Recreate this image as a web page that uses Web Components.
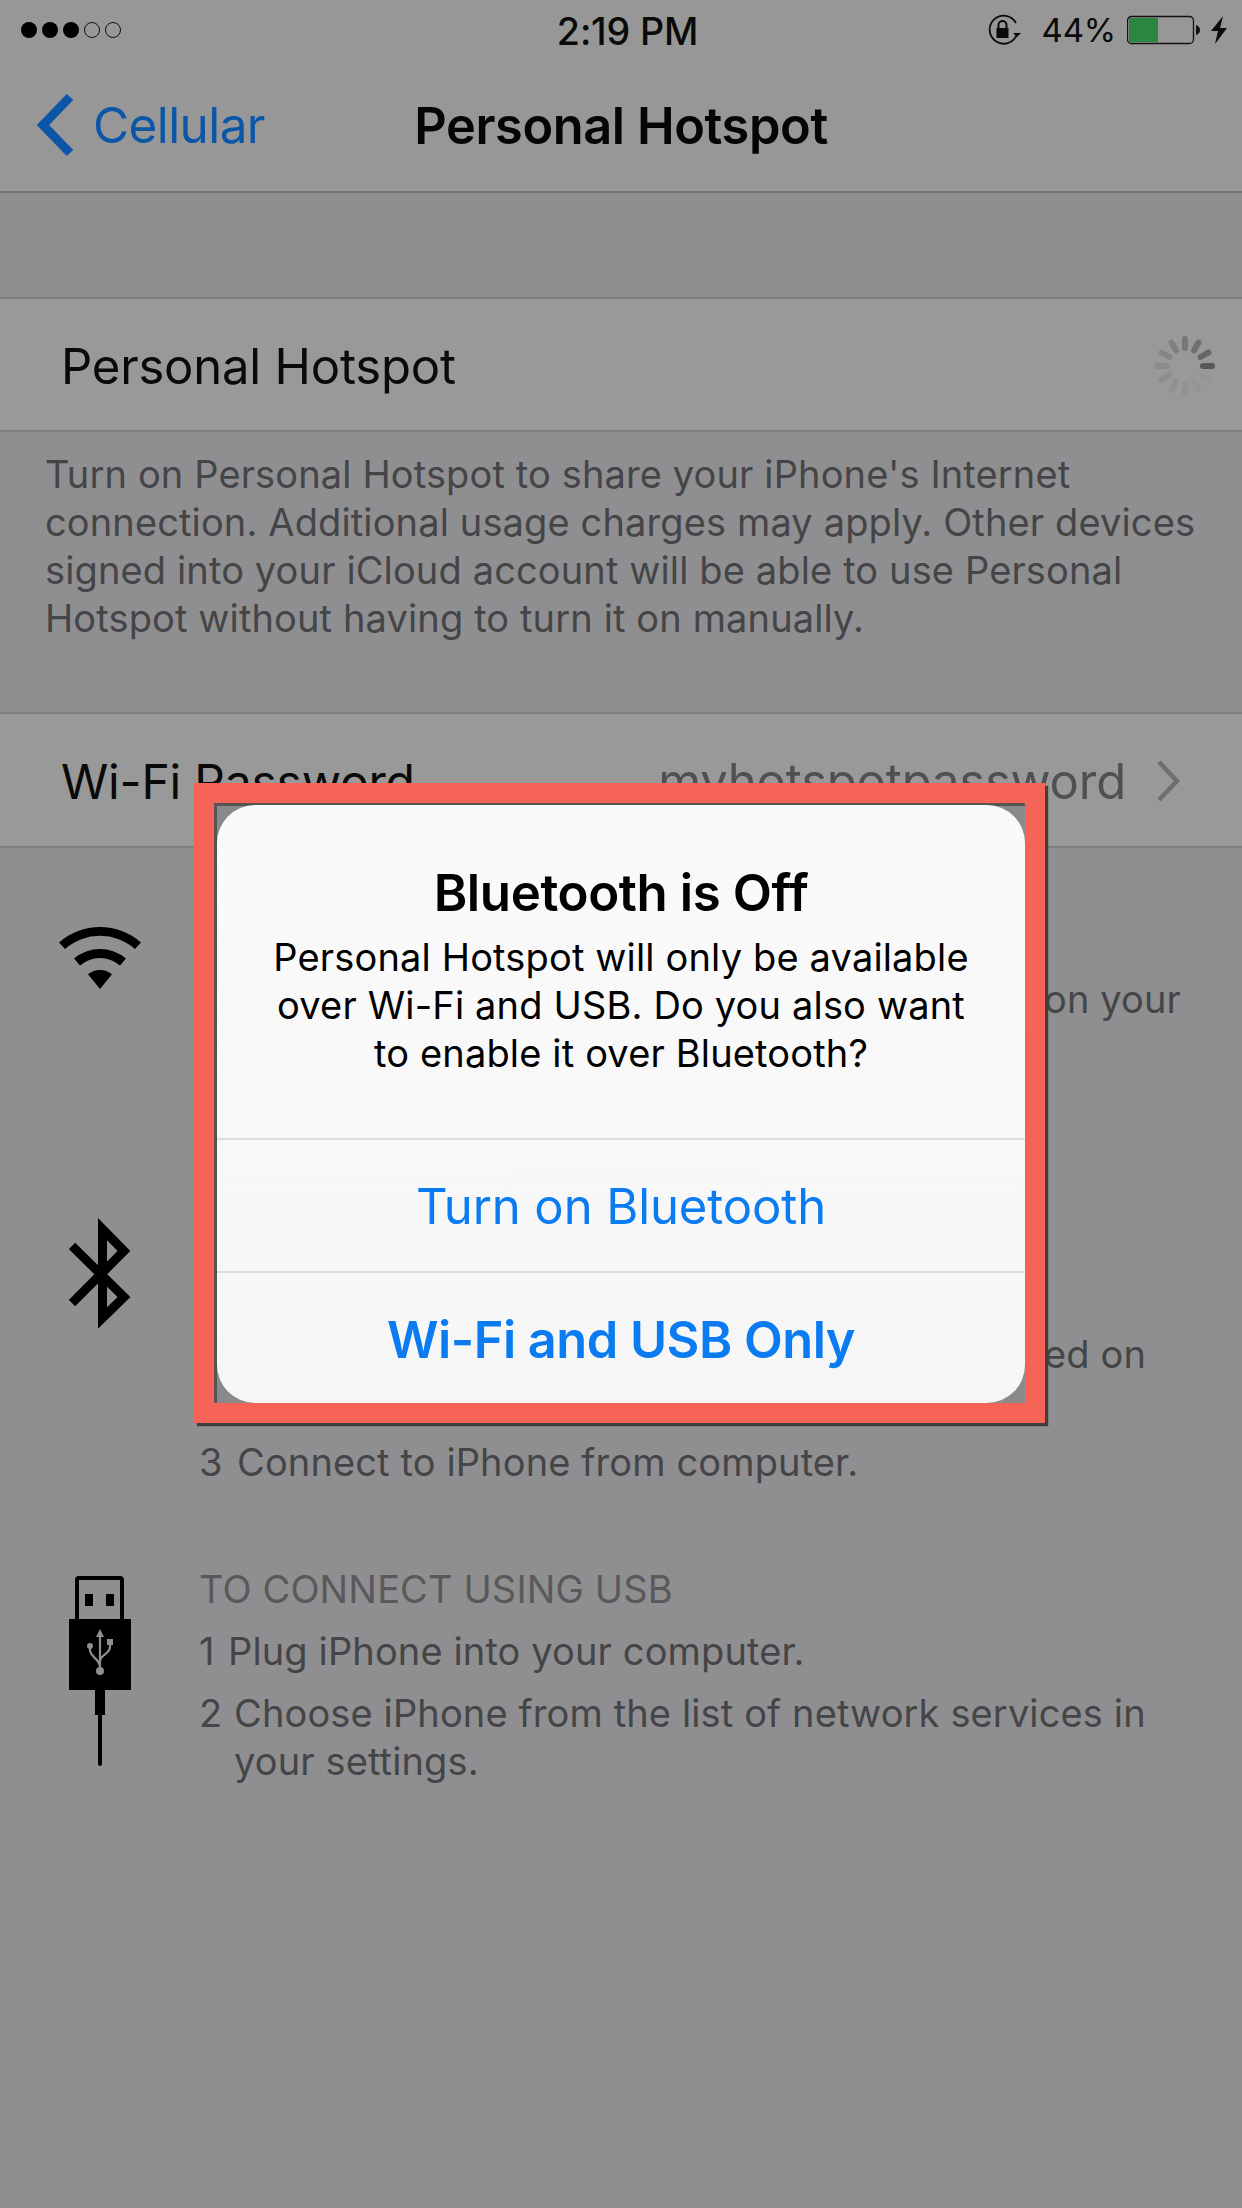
<!DOCTYPE html>
<html><head><meta charset="utf-8">
<style>
html,body{margin:0;padding:0}
body{width:1242px;height:2208px;overflow:hidden;background:#8f8f91;font-family:Inter,"Liberation Sans",sans-serif;position:relative}
</style></head><body>
<template id="t-status"><style>
:host{display:flex;height:60px;align-items:center;justify-content:space-between;padding:0 20px 0 21px;box-sizing:border-box;position:relative;font-size:33px;color:#0a0a0a;background:#979797}
.dots{display:flex;gap:5px}
.dots i{width:16px;height:16px;border-radius:50%;box-sizing:border-box;background:#000;display:block}
.dots i.o{background:none;border:1px solid #111}
.time{position:absolute;left:13px;right:0;top:11px;text-align:center;font-size:37.7px;font-weight:500;line-height:40px;letter-spacing:-.2px}
.right{display:flex;align-items:center}
.pct{margin:0 11px 0 19px;font-size:33px;letter-spacing:-.2px}
</style>
<div class="dots"><i></i><i></i><i></i><i class="o"></i><i class="o"></i></div>
<div class="time">2:19 PM</div>
<div class="right">
<svg width="36" height="32" viewBox="0 0 36 32"><path d="M30 20A14 14 0 1 1 29 9" fill="none" stroke="#0a0a0a" stroke-width="1.8"/><path d="M26 19h8l-4 4z" fill="#0a0a0a"/><rect x="9.5" y="14" width="12" height="10" fill="#0a0a0a"/><path d="M11.5 14v-3a4 4 0 0 1 8 0v3" fill="none" stroke="#0a0a0a" stroke-width="2"/></svg>
<span class="pct">44%</span>
<svg width="76" height="30" viewBox="0 0 76 30"><rect x=".5" y="1.5" width="66" height="27" rx="4" fill="none" stroke="#111" stroke-width="1.3"/><rect x="2" y="3" width="29" height="24" fill="#2d863f"/><path d="M69 10c3 1 4 3 4 5s-1 4-4 5z" fill="#111"/></svg>
<svg style="margin-left:7px;margin-right:-6px" width="18" height="30" viewBox="0 0 18 30"><path d="M13 1 1 16h7l-3 13L17 13h-7z" fill="#0a0a0a"/></svg>
</div></template>

<template id="t-nav"><style>
:host{display:flex;height:133px;box-sizing:border-box;border-bottom:2px solid #757575;align-items:center;position:relative;padding:0 0 1px 36px;background:#979797}
.back{display:flex;align-items:center;gap:17px;color:#0c56a8;font-size:49.5px;letter-spacing:-.6px}
.title{position:absolute;left:0;right:0;top:36px;text-align:center;line-height:60px;font-size:50.5px;font-weight:600;color:#050505;letter-spacing:-.4px}
</style>
<div class="back"><svg width="40" height="64" viewBox="0 0 40 64"><path d="M34 4 7 32l27 28" fill="none" stroke="#0c56a8" stroke-width="9"/></svg>Cellular</div>
<div class="title"><slot></slot></div></template>

<template id="t-cell"><style>
:host{display:flex;height:135px;box-sizing:border-box;background:#999;border-top:2px solid #7f7f7f;border-bottom:2px solid #7f7f7f;align-items:center;padding:2px 52px 0 61px;font-size:49px;color:#0a0a0a;letter-spacing:-.2px}
.s{flex:1}
</style><slot></slot><span class="s"></span><slot name="end"></slot></template>

<template id="t-step"><style>
:host{display:block;font-size:38px;line-height:48px;color:#454547;letter-spacing:.13px}
</style><slot></slot></template>

<template id="t-alert"><style>
:host{position:absolute;left:194px;top:783px;width:851px;height:640px;box-sizing:border-box;border:20px solid #f56457;background:#8a8a8c;box-shadow:3px 3px 1px #3f3f3f;display:block}
.inner{position:absolute;inset:0;box-shadow:inset 3px 3px 0 #555}
.card{position:absolute;left:3px;top:2px;right:0;bottom:0;background:linear-gradient(#fafafa,#f6f6f7);border-radius:38px;display:flex;flex-direction:column;overflow:hidden;box-sizing:border-box}
.body{height:333px;box-sizing:border-box;text-align:center;padding:60px 30px 0;color:#000}
h2{margin:0;font-size:51px;font-weight:600;line-height:56px;letter-spacing:-.4px}
p{margin:12px 0 0;font-size:38px;line-height:48px;letter-spacing:.16px}
button{all:unset;display:block;height:132.5px;line-height:134px;text-align:center;font-size:49px;color:#0a7bf0;border-top:2px solid #dcdcdd;letter-spacing:-.1px;box-sizing:border-box}
button.b{font-weight:600;font-size:50.5px;letter-spacing:-.5px}
</style><div class="inner"></div><div class="card"><div class="body"><h2>Bluetooth is Off</h2><p>Personal Hotspot will only be available<br>over Wi-Fi and USB. Do you also want<br>to enable it over Bluetooth?</p></div><button>Turn on Bluetooth</button><button class="b">Wi-Fi and USB Only</button></div></template>

<template id="t-spin"><style>:host{display:block;width:62px;height:62px;margin:-2px -26px 0 0}</style>
<svg width="62" height="62" viewBox="-31 -31 62 62" id="s"></svg></template>

<template id="t-info"><style>
:host{display:flex;align-items:flex-start;position:relative}
.ic{width:199px;flex:none;display:flex;justify-content:center;box-sizing:border-box}
.tx{flex:1;min-width:0;padding-right:40px}
</style><div class="ic"><slot name="icon"></slot></div><div class="tx"><slot></slot></div></template>

<status-bar></status-bar>
<nav-bar>Personal Hotspot</nav-bar>
<div style="height:104px"></div>
<ios-cell style="padding-top:4px">Personal Hotspot<spin-ner slot="end"></spin-ner></ios-cell>
<ios-text style="padding:18px 20px 0 45px;height:280px;box-sizing:border-box">Turn on Personal Hotspot to share your iPhone's Internet<br>connection. Additional usage charges may apply. Other devices<br>signed into your iCloud account will be able to use Personal<br>Hotspot without having to turn it on manually.</ios-text>
<ios-cell style="height:136px;font-size:48px">Wi-Fi Password<span slot="end" style="display:flex;align-items:center;color:#505052;gap:30px;margin-right:10px;font-size:49px">myhotspotpassword<svg width="24" height="42" viewBox="0 0 24 42"><path d="M3 2l18 19L3 40" fill="none" stroke="#6e6e6e" stroke-width="4.5"/></svg></span></ios-cell>
<info-row style="margin-top:78px;height:292px"><svg slot="icon" width="82" height="64" viewBox="0 0 82 64"><path d="M0 16.5A62 62 0 0 1 82 16.5L76 23A53 53 0 0 0 6 23zM15 32.6A40 40 0 0 1 67 32.6L61 39.4A31 31 0 0 0 21 39.4zM29 48.3A19 19 0 0 1 53 48.3L41 63z" fill="#000"/></svg>
<ios-text style="text-align:right;padding-top:49px;padding-right:21px">on your</ios-text></info-row>
<info-row style="height:0"><svg slot="icon" width="62" height="111" viewBox="0 0 62 111"><path d="M3 28 55 79 33.5 100V11L55 33 3 85" fill="none" stroke="#000" stroke-width="9"/></svg></info-row>
<info-row style="height:347px"><svg slot="icon" width="0" height="0"></svg>
<ios-text style="text-align:right;padding-top:112px;padding-right:56px">ed on</ios-text>
<div style="display:flex;margin-top:60px"><ios-text style="width:38px;flex:none">3</ios-text><ios-text>Connect to iPhone from computer.</ios-text></div></info-row>
<info-row><svg slot="icon" style="margin-top:11px" width="62" height="190" viewBox="0 0 62 190"><path d="M8 44V4a2 2 0 0 1 2-2h41a2 2 0 0 1 2 2v40" fill="none" stroke="#000" stroke-width="4"/><rect x="16" y="18" width="8" height="12"/><rect x="37" y="18" width="8" height="12"/><rect y="43" width="62" height="71"/><rect x="26" y="114" width="10" height="25"/><rect x="29" y="130" width="4" height="60" rx="2"/><g fill="none" stroke="#8f8f91" stroke-width="2.2"><path d="M31 60v36M21 71v3c0 7 10 9 10 17M41 68v3c0 7-10 8-10 14"/></g><g fill="#8f8f91"><circle cx="31" cy="95" r="4"/><circle cx="21" cy="70" r="3"/><rect x="38" y="63" width="6" height="6"/><path d="M31 53l4 8h-8z"/></g></svg>
<div><ios-text style="color:#59595b">TO CONNECT USING USB</ios-text>
<div style="display:flex;margin-top:14px"><ios-text style="width:29px;flex:none">1</ios-text><ios-text>Plug iPhone into your computer.</ios-text></div>
<div style="display:flex;margin-top:14px"><ios-text style="width:35px;flex:none">2</ios-text><ios-text>Choose iPhone from the list of network services in<br>your settings.</ios-text></div></div></info-row>
<ios-alert></ios-alert>

<script>
function reg(name, tpl, init){
  customElements.define(name, class extends HTMLElement{
    constructor(){super();const r=this.attachShadow({mode:'open'});r.appendChild(document.getElementById(tpl).content.cloneNode(true));if(init)init(r)}
  });
}
reg('status-bar','t-status');
reg('nav-bar','t-nav');
reg('ios-cell','t-cell');
reg('ios-text','t-step');
reg('info-row','t-info');
reg('ios-alert','t-alert');
reg('spin-ner','t-spin',r=>{
  const s=r.getElementById('s');let h='';
  const cols=['#585858','#666666','#707070','#787878','#808080','#868686','#8b8b8b','#8e8e8e','#909090','#929292','#949494','#969696'];
  for(let i=0;i<12;i++){
    h+=`<rect x="15" y="-3" width="15" height="6" rx="3" fill="${cols[i]}" transform="rotate(${-i*30})"/>`;
  }
  s.innerHTML=h;
});
</script>
</body></html>
